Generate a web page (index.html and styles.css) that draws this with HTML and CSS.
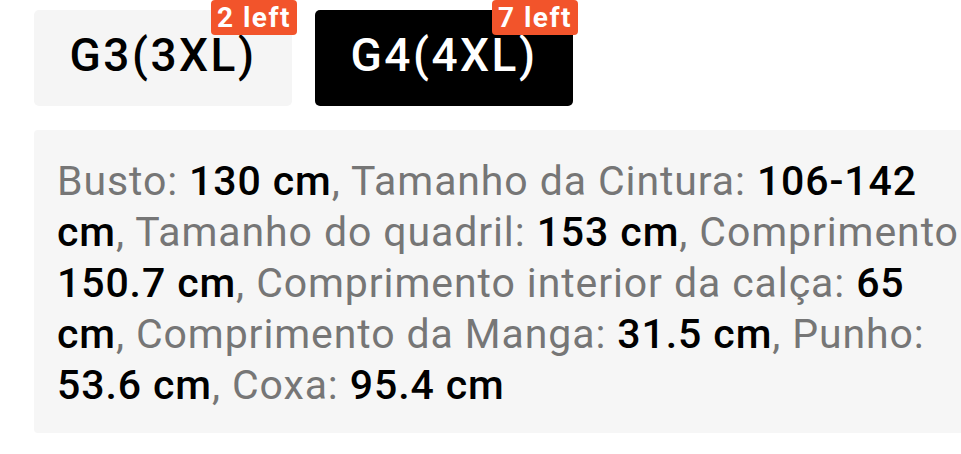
FILE: index.html
```html
<!DOCTYPE html>
<html lang="pt">
<head>
    <meta charset="UTF-8">
    <meta name="viewport" content="width=device-width, initial-scale=1.0">
    <title>Tamanhos</title>
    <link rel="stylesheet" href="styles.css">
</head>
<body>
    <!-- size options -->
    <section class="sizes">
        <div class="size">
            G3(3XL)
            <span class="badge">2 left</span>
        </div>
        <div class="size active">
            G4(4XL)
            <span class="badge">7 left</span>
        </div>
    </section>

    <!-- measurements of the chosen size -->
    <section class="info">
        <p>
            Busto: <b>130 cm</b>, Tamanho da Cintura: <b>106-142</b><br>
            <b>cm</b>, Tamanho do quadril: <b>153 cm</b>, Comprimento<br>
            <b>150.7 cm</b>, Comprimento interior da calça: <b>65</b><br>
            <b>cm</b>, Comprimento da Manga: <b>31.5 cm</b>, Punho:<br>
            <b>53.6 cm</b>, Coxa: <b>95.4 cm</b>
        </p>
    </section>
</body>
</html>
```

FILE: styles.css
```css
* {
    padding: 0px;
    margin: 0px;
    box-sizing: border-box;
}
html, body {
    overflow: hidden;
}
body {
    background-color: white;
    color: black;
    font-family: Roboto, "Noto Sans", sans-serif;
    width: 1100px;
}
.sizes {
    display: flex;
    gap: 23px;
    padding: 10px 0 0 34px;
}
.size {
    position: relative;
    width: 258px;
    height: 96px;
    border-radius: 5px;
    background-color: #f5f5f5;
    display: flex;
    align-items: center;
    justify-content: center;
    font-size: 46px;
    font-weight: 500;
    letter-spacing: 2.5px;
    padding-bottom: 6px;
}
.size.active {
    background-color: black;
    color: white;
}
.badge {
    position: absolute;
    top: -10px;
    right: -5px;
    height: 35px;
    padding: 0 6px;
    border-radius: 4px;
    background-color: #f2542b;
    color: white;
    font-size: 28px;
    font-weight: bold;
    letter-spacing: 1.5px;
    line-height: 35px;
}
.info {
    margin: 24px 0 0 34px;
    width: 1000px;
    background-color: #f6f6f6;
    border-radius: 4px;
    padding: 26px 0 22px 23px;
}
.info p {
    font-size: 41px;
    line-height: 51px;
    letter-spacing: 0.9px;
    color: #767676;
    white-space: nowrap;
}
.info b {
    font-weight: 500;
    color: black;
}
```
